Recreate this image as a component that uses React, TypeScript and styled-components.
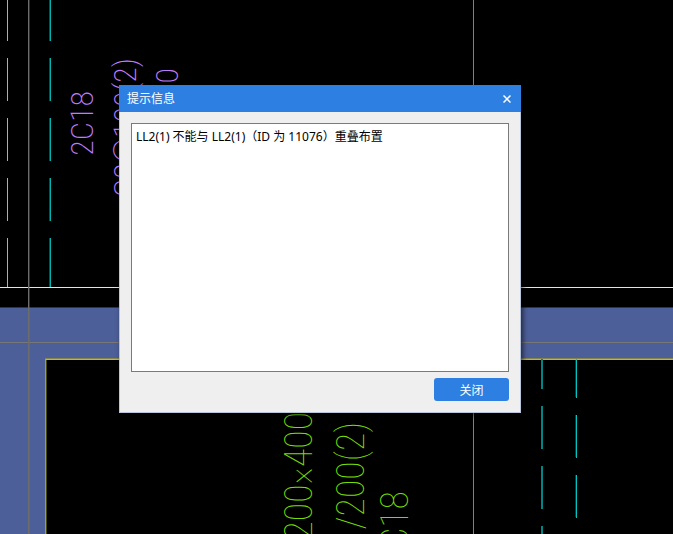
import React from 'react';
import styled, { createGlobalStyle } from 'styled-components';

const GlobalStyle = createGlobalStyle`
  *, *::before, *::after { box-sizing: border-box; }
  body {
    margin: 0;
    background: #000;
    font-family: "Noto Sans", "Noto Sans CJK SC", sans-serif;
    font-size: 12px;
    line-height: 18px;
  }
`;

const Stage = styled.main`
  position: relative;
  display: flex;
  min-height: 100vh;
  padding: 85px 152px 121px 119px;
  overflow: hidden;
`;

const Canvas = styled.svg`
  position: absolute;
  inset: 0;
  width: 100%;
  height: 100%;
  shape-rendering: crispEdges;
`;

const Annotation = styled.text<{ $tone: 'purple' | 'green' }>`
  fill: ${p => (p.$tone === 'purple' ? '#bd7cff' : '#74dc08')};
  font-family: "Roboto Condensed", Roboto, sans-serif;
  font-size: ${p => (p.$tone === 'purple' ? 32 : 38)}px;
  font-weight: ${p => (p.$tone === 'purple' ? 200 : 100)};
  text-anchor: end;
`;

const Dialog = styled.section`
  position: relative;
  display: flex;
  flex: 1;
  flex-direction: column;
  min-width: 0;
  background: #efefef;
  box-shadow: 2px 2px 5px rgba(0, 0, 0, 0.6);
`;

const TitleBar = styled.header`
  display: flex;
  align-items: center;
  justify-content: space-between;
  height: 27px;
  padding: 0 6px 0 8px;
  background: #2d80e2;
  color: #fff;
`;

const Title = styled.h1`
  margin: 0;
  font: inherit;
`;

const IconButton = styled.button`
  display: flex;
  align-items: center;
  justify-content: center;
  width: 16px;
  height: 16px;
  padding: 0;
  border: 0;
  background: none;
  color: inherit;
`;

const Body = styled.div`
  display: flex;
  flex: 1;
  flex-direction: column;
  gap: 6px;
  padding: 11px;
  border: 1px solid #b8c4da;
  border-top: 0;
`;

const Message = styled.textarea`
  flex: 1;
  width: 100%;
  margin: 0;
  padding: 4px;
  border: 1px solid #7a7a7a;
  border-radius: 0;
  outline: 0;
  background: #fff;
  color: #000;
  font: inherit;
  resize: none;
`;

const Actions = styled.footer`
  display: flex;
  justify-content: flex-end;
`;

const ActionButton = styled.button`
  width: 75px;
  height: 23px;
  padding: 2px 0 0;
  border: 0;
  border-radius: 3px;
  background: #2d80e2;
  color: #fff;
  font: inherit;
`;

type Dash = { x: number; width: number; color: string; spans: [number, number][] };

const leftSpans: [number, number][] = [[0, 41], [58, 101], [118, 161], [178, 221], [238, 287]];

const dashes: Dash[] = [
  { x: 7, width: 1, color: '#0ef2f6', spans: leftSpans },
  { x: 49, width: 1, color: '#005555', spans: leftSpans },
  { x: 50, width: 1, color: '#00b4b4', spans: leftSpans },
  { x: 541, width: 2, color: '#008484', spans: [[359, 389], [406, 449], [466, 509], [526, 569]] },
  { x: 575, width: 1, color: '#004444', spans: [[360, 397], [415, 457], [475, 517]] },
  { x: 576, width: 1, color: '#00c4c4', spans: [[359, 398], [415, 458], [475, 518]] },
];

type Note = { text: string; x: number; y: number; tone: 'purple' | 'green' };

const notes: Note[] = [
  { text: '2C18', x: 93, y: 91, tone: 'purple' },
  { text: 'C8@100(2)', x: 136, y: 58, tone: 'purple' },
  { text: '00', x: 178, y: 68, tone: 'purple' },
  { text: '200×400', x: 312, y: 412, tone: 'green' },
  { text: '/200(2)', x: 364, y: 422, tone: 'green' },
  { text: 'C18', x: 408, y: 491, tone: 'green' },
];

function Drawing() {
  return (
    <Canvas aria-label="平面图" role="img">
      <rect x="0" y="307" width="100%" height="53" fill="#4d5f99" />
      <rect x="0" y="307" width="100%" height="1" fill="#29345a" />
      <rect x="0" y="359" width="46" height="100%" fill="#4d5f99" />
      <rect x="0" y="287" width="100%" height="1" fill="#ffff10" />
      <rect x="0" y="342" width="100%" height="1" fill="#777777" />
      <rect x="28" y="0" width="1" height="100%" fill="#6c6c6c" />
      <rect x="29" y="0" width="1" height="100%" fill="#707070" opacity="0.4" />
      <rect x="473" y="0" width="1" height="100%" fill="#808080" />
      <rect x="45" y="358" width="100%" height="1" fill="#85854a" />
      <rect x="45" y="359" width="100%" height="1" fill="#bfc30c" />
      <rect x="45" y="359" width="1" height="100%" fill="#a5a51c" />
      <rect x="46" y="360" width="1" height="100%" fill="#4c4c00" />
      {dashes.map(d =>
        d.spans.map(([from, to]) => (
          <rect key={`${d.x}-${from}`} x={d.x} y={from} width={d.width} height={to - from} fill={d.color} />
        )),
      )}
      {notes.map(n => (
        <Annotation key={n.text} $tone={n.tone} transform={`translate(${n.x} ${n.y}) rotate(-90)`}>
          {n.text}
        </Annotation>
      ))}
    </Canvas>
  );
}

export default function App() {
  return (
    <>
      <GlobalStyle />
      <Stage>
        <Drawing />
        <Dialog role="dialog" aria-labelledby="dialog-title">
          <TitleBar>
            <Title id="dialog-title">提示信息</Title>
            <IconButton type="button" aria-label="关闭窗口">
              <svg width="8" height="8" viewBox="0 0 8 8" fill="none" stroke="currentColor" strokeWidth="1.5">
                <path d="M0.5 0.5 L7.5 7.5 M7.5 0.5 L0.5 7.5" />
              </svg>
            </IconButton>
          </TitleBar>
          <Body>
            <Message
              readOnly
              aria-label="提示信息内容"
              defaultValue="LL2(1) 不能与 LL2(1)（ID 为 11076）重叠布置"
            />
            <Actions>
              <ActionButton type="button">关闭</ActionButton>
            </Actions>
          </Body>
        </Dialog>
      </Stage>
    </>
  );
}
